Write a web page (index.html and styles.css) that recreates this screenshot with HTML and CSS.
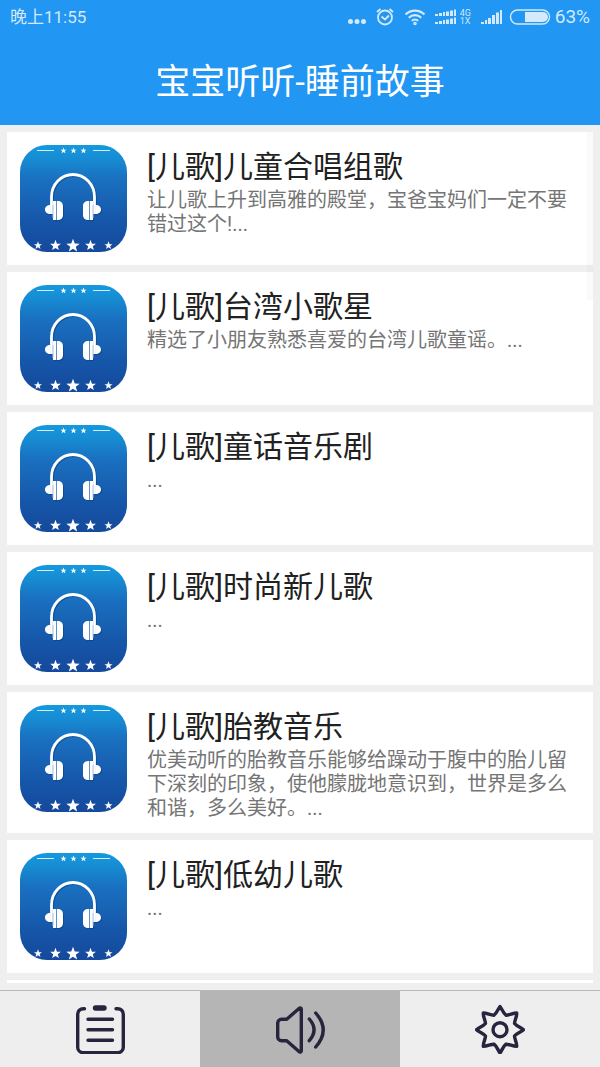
FILE: index.html
```html
<!DOCTYPE html>
<html lang="zh-CN">
<head>
<meta charset="utf-8">
<meta name="viewport" content="width=device-width, initial-scale=1">
<title>宝宝听听-睡前故事</title>
<link rel="stylesheet" href="styles.css">
</head>
<body>
<svg class="defs" aria-hidden="true">
  <defs>
    <linearGradient id="cover-bg" x1="0" y1="0" x2="0" y2="1">
      <stop offset="0" stop-color="#1599de"/>
      <stop offset="0.12" stop-color="#168dd4"/>
      <stop offset="0.32" stop-color="#1a70c0"/>
      <stop offset="0.7" stop-color="#1657aa"/>
      <stop offset="1" stop-color="#15499b"/>
    </linearGradient>
    <path id="star" d="M0-1 .25-.32.95-.31.4.13.59.81 0 .42-.59.81-.4.13-.95-.31-.25-.32Z"/>
    <g id="phones">
      <path d="M31.500 69V52a21.500 22.500 0 0 1 43 0V69" fill="none" stroke-width="2.800"/>
      <g stroke="none">
        <path d="M30.500 60v9c-3.500 0-5.500-2-5.500-4.500s2-4.500 5.500-4.500ZM75.500 60v9c3.500 0 5.500-2 5.500-4.500s-2-4.500-5.500-4.500Z"/>
        <path d="M33 56h4.500c3.500 0 5.500 2 5.500 5v9c0 3-2 5-5.500 5H33ZM73 56h-4.500c-3.500 0-5.500 2-5.500 5v9c0 3 2 5 5.500 5H73Z"/>
      </g>
    </g>
    <symbol id="cover" viewBox="0 0 107 107">
      <rect width="107" height="107" rx="27" fill="url(#cover-bg)"/>
      <path d="M17 5.500h17M73 5.500h17" stroke="#d5ecfa" stroke-width="1.200"/>
      <g fill="#fff">
        <use href="#star" transform="translate(43.500 5.700) scale(3.200)"/>
        <use href="#star" transform="translate(53.500 5.700) scale(3.200)"/>
        <use href="#star" transform="translate(63.500 5.700) scale(3.200)"/>
        <use href="#star" transform="translate(18 100.500) scale(4.200)"/>
        <use href="#star" transform="translate(35.500 100.500) scale(5.700)"/>
        <use href="#star" transform="translate(53 100.800) scale(7)"/>
        <use href="#star" transform="translate(70.500 100.500) scale(5.700)"/>
        <use href="#star" transform="translate(88.500 100.500) scale(4.200)"/>
      </g>
      <use href="#phones" transform="translate(1 1)" fill="#0d3a78" stroke="#0d3a78" opacity="0.5"/>
      <use href="#phones" fill="#fff" stroke="#fff"/>
      <path d="M36.500 56v19M69.500 56v19" stroke="#5f8fc8"/>
      <path d="M33 60v13M73 60v13" stroke="#a9c4e4"/>
    </symbol>
  </defs>
</svg>

<div class="app">
  <header class="top">
    <div class="status">
      <span class="clock">晚上11:55</span>
      <div class="indicators">
        <svg class="dots" viewBox="0 0 18 18"><circle cx="2.500" cy="13.500" r="2.500"/><circle cx="9" cy="13.500" r="2.500"/><circle cx="15.500" cy="13.500" r="2.500"/></svg>
        <svg class="alarm" viewBox="0 0 18 18" fill="none"><circle cx="9" cy="9.500" r="7"/><path d="M5.500 8.500 9 11.500l4-4M1 4 4.500 1M17 4l-3.500-3"/></svg>
        <svg class="wifi" viewBox="0 0 22 18" fill="none"><path d="M1.500 6.500a13.500 13.500 0 0 1 19 0M4.800 9.700a9 9 0 0 1 12.400 0M7.800 12.700a4.800 4.800 0 0 1 6.400 0"/><circle cx="11" cy="15.500" r="0.700"/></svg>
        <svg class="dual" viewBox="0 0 22 18"><path d="M0 6h3v2H0ZM4 5h3v3H4ZM8 4h2v4H8ZM11 3.500h3V8h-3ZM15 2.500h3V8h-3ZM19 1.500h2V8h-2ZM0 14h3v2H0ZM4 13h3v3H4ZM8 12h2v4H8ZM11 11.500h3V16h-3ZM15 10.500h3V16h-3ZM19 9.500h2V16h-2Z"/></svg>
        <span class="network"><span>4G</span><span>1X</span></span>
        <svg class="bars" viewBox="0 0 22 18"><path d="M0 14h3v2H0ZM4 12h2v4H4ZM7 10h3v6H7ZM11 7h3v9h-3ZM15 4.500h3V16h-3ZM19 2h2v14h-2Z"/></svg>
        <svg class="battery" viewBox="0 0 42 18"><rect x="1.500" y="2" width="39" height="14" rx="7" fill="none"/><path d="M16 4h18a5 5 0 0 1 0 10H16Z"/></svg>
        <span class="percent">63%</span>
      </div>
    </div>
    <h1 class="title">宝宝听听-睡前故事</h1>
  </header>

  <main class="content">
    <ul class="list">
      <li class="card">
        <svg class="cover" aria-hidden="true"><use href="#cover"/></svg>
        <div class="info">
          <h2 class="name">[儿歌]儿童合唱组歌</h2>
          <p class="desc">让儿歌上升到高雅的殿堂，宝爸宝妈们一定不要错过这个!...</p>
        </div>
      </li>
      <li class="card">
        <svg class="cover" aria-hidden="true"><use href="#cover"/></svg>
        <div class="info">
          <h2 class="name">[儿歌]台湾小歌星</h2>
          <p class="desc">精选了小朋友熟悉喜爱的台湾儿歌童谣。...</p>
        </div>
      </li>
      <li class="card">
        <svg class="cover" aria-hidden="true"><use href="#cover"/></svg>
        <div class="info">
          <h2 class="name">[儿歌]童话音乐剧</h2>
          <p class="desc">...</p>
        </div>
      </li>
      <li class="card">
        <svg class="cover" aria-hidden="true"><use href="#cover"/></svg>
        <div class="info">
          <h2 class="name">[儿歌]时尚新儿歌</h2>
          <p class="desc">...</p>
        </div>
      </li>
      <li class="card">
        <svg class="cover" aria-hidden="true"><use href="#cover"/></svg>
        <div class="info">
          <h2 class="name">[儿歌]胎教音乐</h2>
          <p class="desc">优美动听的胎教音乐能够给躁动于腹中的胎儿留下深刻的印象，使他朦胧地意识到，世界是多么和谐，多么美好。...</p>
        </div>
      </li>
      <li class="card">
        <svg class="cover" aria-hidden="true"><use href="#cover"/></svg>
        <div class="info">
          <h2 class="name">[儿歌]低幼儿歌</h2>
          <p class="desc">...</p>
        </div>
      </li>
      <li class="card"></li>
    </ul>
    <div class="scroll-thumb"></div>
  </main>

  <nav class="tabs">
    <button class="tab" type="button" aria-label="列表">
      <svg class="tab-icon" viewBox="0 0 50 50"><path d="M9.500 4.700H8.200A5.500 5.500 0 0 0 2.700 10.200v33a5.500 5.500 0 0 0 5.500 5.500h34.600a5.500 5.500 0 0 0 5.500-5.500v-33a5.500 5.500 0 0 0-5.500-5.500H41M13 15.300h24.500M13 25.700h24.500M13 36.300h24.500"/><path class="clip" d="M20.500 4h8.500"/></svg>
    </button>
    <button class="tab active" type="button" aria-label="播放">
      <svg class="tab-icon" viewBox="0 0 50 50"><path d="M11.700 15.300H6.500a3.800 3.800 0 0 0-3.800 3.800v13.800a3.800 3.800 0 0 0 3.800 3.800h5.200L24 47.500q2.300 1.500 2.300-1V5.500q0-2.500-2.300-1ZM34.300 15q9.500 10.800 0 21.600M40.700 9q15 17 0 34"/></svg>
    </button>
    <button class="tab" type="button" aria-label="设置">
      <svg class="tab-icon" viewBox="0 0 50 50"><path d="M25 2.500C27 5 28 9 31 11.200 34 11.500 38 9 41.700 9 42 12.500 39.500 16.500 39.500 19.500 42 22.500 46 23.500 48.500 25.700 46 28 42 29 39.500 32 39.500 35 42 39 41.700 42.400 38 42.500 34 40 31 40.200 28 42.500 27 46.500 25 49 23 46.500 22 42.500 19 40.200 16 40 12 42.500 8.300 42.400 8 39 10.500 35 10.500 32 8 29 4 28 1.500 25.700 4 23.500 8 22.500 10.500 19.500 10.500 16.500 8 12.500 8.300 9 12 9 16 11.500 19 11.200 22 9 23 5 25 2.500Z"/><circle cx="25" cy="25.700" r="7"/></svg>
    </button>
  </nav>
</div>
</body>
</html>
```
FILE: styles.css
```css
* {
  box-sizing: border-box;
}

body {
  margin: 0;
  background: #efefef;
  font-family: Roboto, "Noto Sans CJK SC", sans-serif;
}

.defs {
  position: absolute;
  width: 0;
  height: 0;
}

.app {
  display: flex;
  flex-direction: column;
  height: 100vh;
}

.top {
  background: #2196f3;
  color: #fff;
}

.status {
  display: flex;
  justify-content: space-between;
  align-items: center;
  height: 33px;
  padding: 0 10px;
  color: #d3e9fc;
}

.clock {
  padding-bottom: 2px;
  font-size: 17px;
}

.indicators {
  display: flex;
  align-items: center;
}

.indicators svg {
  height: 18px;
  fill: currentColor;
}

.dots {
  width: 18px;
  margin-right: 10px;
}

.indicators .alarm {
  width: 18px;
  margin-right: 10px;
  fill: none;
  stroke: currentColor;
  stroke-width: 1.8;
}

.indicators .wifi {
  width: 22px;
  margin-right: 9px;
  fill: none;
  stroke: currentColor;
  stroke-width: 2.2;
}

.dual {
  width: 22px;
  margin-right: 3px;
}

.network {
  display: flex;
  flex-direction: column;
  width: 12px;
  margin-right: 9px;
  font-size: 9px;
  line-height: 8px;
}

.bars {
  width: 22px;
  margin-right: 6px;
}

.battery {
  width: 42px;
  margin-right: 4px;
}

.battery rect {
  stroke: currentColor;
  stroke-width: 1.4;
}

.percent {
  font-size: 19px;
}

.title {
  margin: 0;
  padding-top: 8px;
  font-size: 35px;
  font-weight: 400;
  line-height: 84px;
  text-align: center;
}

.content {
  position: relative;
  flex: 1;
  min-height: 0;
  padding: 7px;
}

.list {
  display: flex;
  flex-direction: column;
  gap: 7px;
  height: 100%;
  margin: 0;
  padding: 0;
  overflow-y: auto;
  scrollbar-width: none;
  list-style: none;
}

.card {
  display: flex;
  flex-shrink: 0;
  gap: 20px;
  min-height: 133px;
  padding: 13px;
  background: #fff;
}

.cover {
  flex-shrink: 0;
  width: 107px;
  height: 107px;
}

.info {
  flex: 1;
  min-width: 0;
}

.name {
  margin: 0;
  color: #212121;
  font-size: 30px;
  font-weight: 400;
  line-height: 43px;
}

.desc {
  margin: 0;
  color: #757575;
  font-size: 20px;
  line-height: 24px;
}

.scroll-thumb {
  position: absolute;
  top: 7px;
  right: 7px;
  width: 6px;
  height: 168px;
  background: rgba(0, 0, 0, 0.02);
}

.tabs {
  display: flex;
  height: 77px;
  border-top: 1px solid #b9b9b9;
}

.tab {
  display: flex;
  flex: 1;
  justify-content: center;
  align-items: center;
  padding: 0;
  border: 0;
  background: #eee;
}

.tab.active {
  background: #b5b5b5;
}

.tab-icon {
  width: 50px;
  height: 50px;
  fill: none;
  stroke: #27253d;
  stroke-width: 3.4;
  stroke-linecap: round;
  stroke-linejoin: round;
}

.clip {
  stroke-width: 5.4;
}
```
